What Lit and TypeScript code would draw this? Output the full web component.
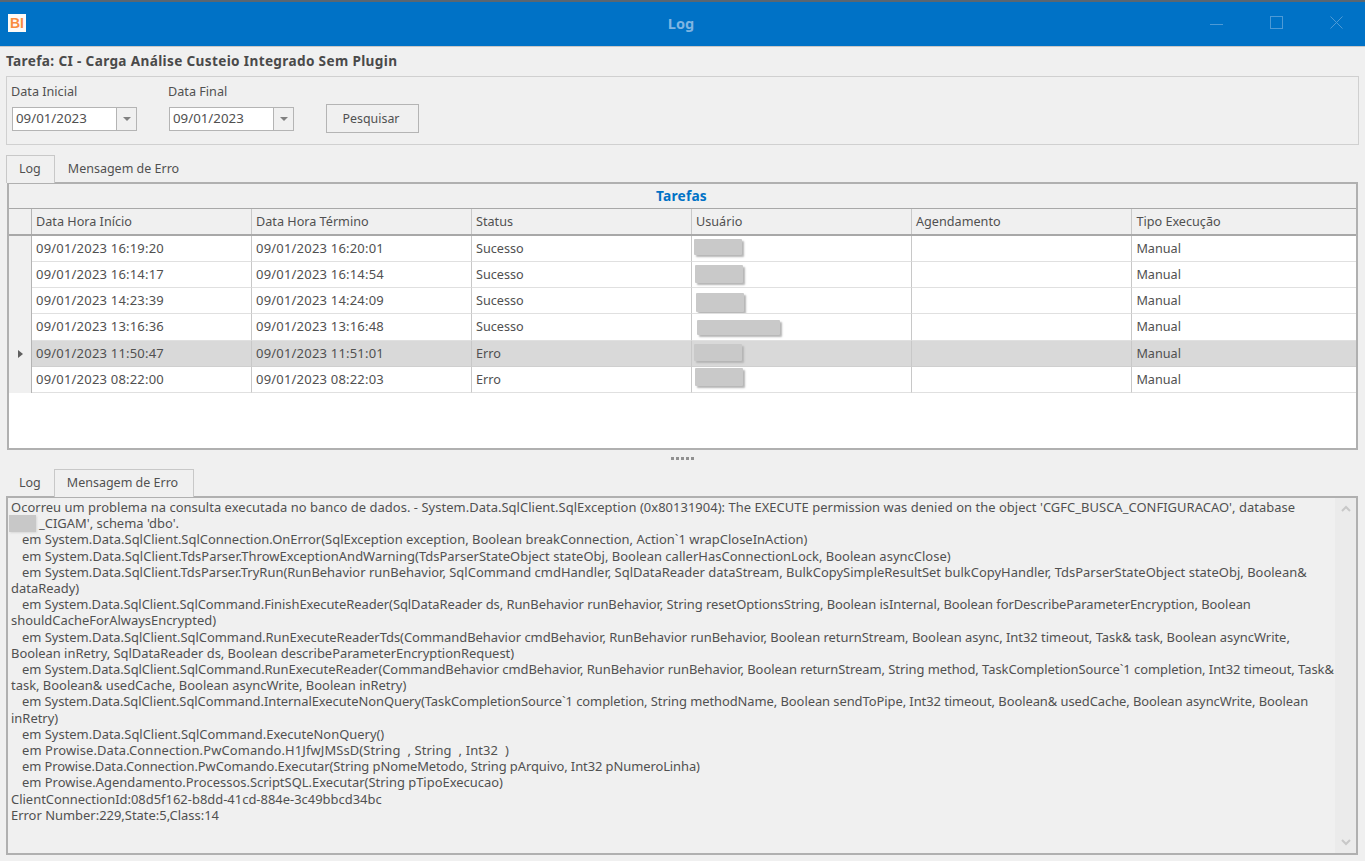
import { LitElement, html, css } from "lit";
import { customElement } from "lit/decorators.js";

// start, end, status, mask width, mask left, mask top, mask height, selected
const ROWS = [
  ["09/01/2023 16:19:20", "09/01/2023 16:20:01", "Sucesso", 48, 2, 3, 16, false],
  ["09/01/2023 16:14:17", "09/01/2023 16:14:54", "Sucesso", 48, 3, 3, 18, false],
  ["09/01/2023 14:23:39", "09/01/2023 14:24:09", "Sucesso", 48, 4, 5, 19, false],
  ["09/01/2023 13:16:36", "09/01/2023 13:16:48", "Sucesso", 83, 5, 6, 15, false],
  ["09/01/2023 11:50:47", "09/01/2023 11:51:01", "Erro", 48, 2, 3, 17, true],
  ["09/01/2023 08:22:00", "09/01/2023 08:22:03", "Erro", 48, 3, 1.5, 18, false],
] as const;

const HEADS = ["Data Hora Início", "Data Hora Término", "Status", "Usuário", "Agendamento", "Tipo Execução"];

// [text, kind, letter spacing] kind: 0 = flush, 1 = indented stack-trace line, 2 = line whose start is masked
const LOG: [string, number, number][] = [
  ["Ocorreu um problema na consulta executada no banco de dados. - System.Data.SqlClient.SqlException (0x80131904): The EXECUTE permission was denied on the object 'CGFC_BUSCA_CONFIGURACAO', database", 0, 0.04],
  ["_CIGAM', schema 'dbo'.", 2, 0],
  ["em System.Data.SqlClient.SqlConnection.OnError(SqlException exception, Boolean breakConnection, Action`1 wrapCloseInAction)", 1, 0.016],
  ["em System.Data.SqlClient.TdsParser.ThrowExceptionAndWarning(TdsParserStateObject stateObj, Boolean callerHasConnectionLock, Boolean asyncClose)", 1, 0.03],
  ["em System.Data.SqlClient.TdsParser.TryRun(RunBehavior runBehavior, SqlCommand cmdHandler, SqlDataReader dataStream, BulkCopySimpleResultSet bulkCopyHandler, TdsParserStateObject stateObj, Boolean&", 1, 0.015],
  ["dataReady)", 0, 0],
  ["em System.Data.SqlClient.SqlCommand.FinishExecuteReader(SqlDataReader ds, RunBehavior runBehavior, String resetOptionsString, Boolean isInternal, Boolean forDescribeParameterEncryption, Boolean", 1, -0.058],
  ["shouldCacheForAlwaysEncrypted)", 0, 0],
  ["em System.Data.SqlClient.SqlCommand.RunExecuteReaderTds(CommandBehavior cmdBehavior, RunBehavior runBehavior, Boolean returnStream, Boolean async, Int32 timeout, Task& task, Boolean asyncWrite,", 1, -0.02],
  ["Boolean inRetry, SqlDataReader ds, Boolean describeParameterEncryptionRequest)", 0, -0.025],
  ["em System.Data.SqlClient.SqlCommand.RunExecuteReader(CommandBehavior cmdBehavior, RunBehavior runBehavior, Boolean returnStream, String method, TaskCompletionSource`1 completion, Int32 timeout, Task&", 1, -0.045],
  ["task, Boolean& usedCache, Boolean asyncWrite, Boolean inRetry)", 0, 0],
  ["em System.Data.SqlClient.SqlCommand.InternalExecuteNonQuery(TaskCompletionSource`1 completion, String methodName, Boolean sendToPipe, Int32 timeout, Boolean& usedCache, Boolean asyncWrite, Boolean", 1, -0.065],
  ["inRetry)", 0, 0],
  ["em System.Data.SqlClient.SqlCommand.ExecuteNonQuery()", 1, 0],
  ["em Prowise.Data.Connection.PwComando.H1JfwJMSsD(String  , String  , Int32  )", 1, 0.12],
  ["em Prowise.Data.Connection.PwComando.Executar(String pNomeMetodo, String pArquivo, Int32 pNumeroLinha)", 1, -0.08],
  ["em Prowise.Agendamento.Processos.ScriptSQL.Executar(String pTipoExecucao)", 1, 0],
  ["ClientConnectionId:08d5f162-b8dd-41cd-884e-3c49bbcd34bc", 0, 0],
  ["Error Number:229,State:5,Class:14", 0, 0],
];

@customElement("app-root")
export class AppRoot extends LitElement {
  static styles = css`
    :host {
      display: block;
      width: 1365px;
      height: 861px;
      overflow: hidden;
      background: #f0f0f0;
      font-family: "Noto Sans", "Open Sans", sans-serif;
      font-size: 12.65px;
      color: #505050;
      box-sizing: border-box;
    }
    * { box-sizing: border-box; }
    .titlebar {
      height: 47px;
      background: #0072c6;
      border-top: 2px solid #5a6670;
      border-bottom: 1px solid #c8c8c8;
      display: grid;
      grid-template-columns: 1fr auto 1fr;
      align-items: center;
      padding: 0 22px 3px 8px;
    }
    .logo {
      width: 18px;
      height: 18px;
      background: #fdfaf6;
      color: #f98c3e;
      font: 700 14px "Liberation Sans", sans-serif;
      display: flex;
      align-items: center;
      justify-content: center;
    }
    .wintitle {
      color: #7fb5e2;
      font-size: 14.5px;
      font-weight: 700;
      padding-left: 11px;
    }
    .winbtns { display: flex; gap: 47px; align-items: center; justify-content: flex-end; }
    .winbtns svg { display: block; }
    .task {
      height: 29px;
      padding: 4px 0 0 6px;
      font-weight: 700;
      font-size: 13.6px;
      letter-spacing: 0.35px;
      line-height: 20px;
      color: #4a4a4a;
    }
    .group {
      margin: 0 6px;
      height: 69px;
      border: 1px solid #d0d0d0;
      padding: 5px 5px 0 4px;
      display: flex;
      gap: 31px;
    }
    .field { display: flex; flex-direction: column; gap: 7px; }
    .field label { line-height: 18px; height: 18px; }
    .combo {
      width: 125px;
      height: 24px;
      margin-left: 1px;
      display: flex;
      background: #fff;
      border: 1px solid #b4b4b4;
    }
    .combo span { flex: 1; padding-left: 3px; line-height: 21px; font-size: 13.3px; }
    .combo i {
      width: 20px;
      background: #f0f0f0;
      border-left: 1px solid #b4b4b4;
      display: flex;
      align-items: center;
      justify-content: center;
    }
    .combo i::after {
      content: "";
      border: 4px solid transparent;
      border-top: 4px solid #808080;
      border-bottom: 0;
    }
    .btn {
      width: 93px;
      height: 29px;
      margin-top: 22px;
      margin-left: 1px;
      padding-right: 3px;
      border: 1px solid #b4b4b4;
      display: flex;
      align-items: center;
      justify-content: center;
      background: #f0f0f0;
      font-size: 12.4px;
    }
    .tabs {
      margin: 10px 6px 0;
      height: 27px;
      display: flex;
      align-items: stretch;
      position: relative;
      z-index: 1;
    }
    .tab {
      padding: 4px 15px 0 12px;
      line-height: 18px;
      height: 27px;
      border: 1px solid transparent;
      border-bottom: 0;
      font-size: 12.5px;
    }
    .tab.on {
      border-color: #c8c8c8;
      background: #f0f0f0;
      height: 28px;
    }
    .first { padding-right: 13px; }
    .short { padding-right: 12px; }
    .grid {
      margin: 0 7px;
      height: 268px;
      border: 2px solid #b0b0b0;
      background: #fff;
      display: flex;
      flex-direction: column;
    }
    .band {
      height: 25px;
      background: #f0f0f0;
      text-align: center;
      color: #0072c6;
      font-weight: 700;
      line-height: 24px;
      font-size: 13.7px;
      letter-spacing: 0.22px;
      border-bottom: 1px solid #a8a8a8;
      padding-right: 2px;
    }
    .row {
      display: grid;
      grid-template-columns: 23px repeat(5, 220px) 1fr;
    }
    .head { height: 27px; background: #f0f0f0; border-bottom: 2px solid #a8a8a8; }
    .head .c { line-height: 25px; }
    .c {
      border-right: 1px solid #c8c8c8;
      padding-left: 4px;
      white-space: nowrap;
      overflow: hidden;
    }
    .c:last-child { border-right: 0; padding-left: 4.4px; }
    .num { font-size: 13px; letter-spacing: 0.2px; }
    .ind { background: #f0f0f0; padding: 0; border-right: 1px solid #b4b4b4; display: flex; align-items: center; justify-content: center; }
    .ind.mark::after {
      content: "";
      border: 4px solid transparent;
      border-left: 5px solid #606060;
      border-right: 0;
    }
    .body { height: 26.15px; }
    .body .c { line-height: 25px; border-bottom: 1px solid #e0e0e0; height: 100%; }
    .body.sel .c:not(.ind) { background: #d9d9d9; border-bottom-color: #cfcfcf; }
    .body .ind { border-bottom: 0; }
    .body .user { padding-left: 0; }
    .hide {
      display: block;
      background: #c9c9c9;
      box-shadow: 2px 2px 2px #b5b5b5;
      border-radius: 1px;
    }
    .filler { flex: 1; background: #fff; }
    .splitter {
      height: 17px;
      padding-bottom: 1px;
      display: flex;
      justify-content: center;
      align-items: center;
      gap: 2px;
    }
    .splitter b { width: 3px; height: 3px; background: #909090; }
    .tabs2 { margin-top: 2px; height: 27px; }
    .msg {
      margin: 0 7px 0 6px;
      height: 359px;
      border: 2px solid #b0b0b0;
      display: flex;
      background: #f0f0f0;
      position: relative;
    }
    .text {
      flex: 1;
      padding: 1px 0 0 3px;
      line-height: 16.2px;
      font-size: 12.94px;
      white-space: pre;
      overflow: hidden;
    }
    .k1 { padding-left: 11px; }
    .k2 { padding-left: 28px; }
    .sb {
      width: 21px;
      background: #ebebeb;
      display: flex;
      flex-direction: column;
      justify-content: space-between;
      align-items: center;
      padding: 7px 0 7px;
    }
    .redact {
      position: absolute;
      left: 1px;
      top: 17px;
      width: 27px;
      height: 17px;
      background: #c8c8c8;
      box-shadow: 1px 1px 2px #d8d8d8;
    }
  `;

  render() {
    return html`
      <div class="titlebar">
        <div class="logo">BI</div>
        <div class="wintitle">Log</div>
        <div class="winbtns">
          <svg width="13" height="13" viewBox="0 0 13 13"><path d="M0 8.5h13" stroke="#4d9ad6" stroke-width="1"/></svg>
          <svg width="13" height="13" viewBox="0 0 13 13"><rect x=".5" y=".5" width="12" height="12" fill="none" stroke="#4d9ad6"/></svg>
          <svg width="13" height="13" viewBox="0 0 13 13"><path d="M.5.5l12 12M12.5.5l-12 12" stroke="#4d9ad6" fill="none"/></svg>
        </div>
      </div>
      <div class="task">Tarefa: CI - Carga Análise Custeio Integrado Sem Plugin</div>
      <div class="group">
        <div class="field"><label>Data Inicial</label><div class="combo"><span>09/01/2023</span><i></i></div></div>
        <div class="field"><label>Data Final</label><div class="combo"><span>09/01/2023</span><i></i></div></div>
        <div class="btn">Pesquisar</div>
      </div>
      <div class="tabs">
        <div class="tab on first">Log</div>
        <div class="tab">Mensagem de Erro</div>
      </div>
      <div class="grid">
        <div class="band">Tarefas</div>
        <div class="row head">
          <div class="c ind"></div>
          ${HEADS.map((h) => html`<div class="c">${h}</div>`)}
        </div>
        ${ROWS.map(
          (r) => html`<div class="row body ${r[7] ? "sel" : ""}">
            <div class="c ind ${r[7] ? "mark" : ""}"></div>
            <div class="c num">${r[0]}</div>
            <div class="c num">${r[1]}</div>
            <div class="c">${r[2]}</div>
            <div class="c user"><span class="hide" style="width:${r[3]}px;margin-left:${r[4]}px;margin-top:${r[5]}px;height:${r[6]}px"></span></div>
            <div class="c"></div>
            <div class="c">Manual</div>
          </div>`
        )}
        <div class="filler"></div>
      </div>
      <div class="splitter"><b></b><b></b><b></b><b></b><b></b></div>
      <div class="tabs tabs2">
        <div class="tab short">Log</div>
        <div class="tab on">Mensagem de Erro</div>
      </div>
      <div class="msg">
        <div class="text">${LOG.map((l) => html`<div class="k${l[1]}" style="letter-spacing:${l[2]}px">${l[0]}</div>`)}</div>
        <div class="sb">
          <svg width="10" height="7" viewBox="0 0 10 7"><path d="M1 6l4-4 4 4" fill="none" stroke="#c8c8c8" stroke-width="2"/></svg>
          <svg width="10" height="7" viewBox="0 0 10 7"><path d="M1 1l4 4 4-4" fill="none" stroke="#c8c8c8" stroke-width="2"/></svg>
        </div>
        <div class="redact"></div>
      </div>
    `;
  }
}
